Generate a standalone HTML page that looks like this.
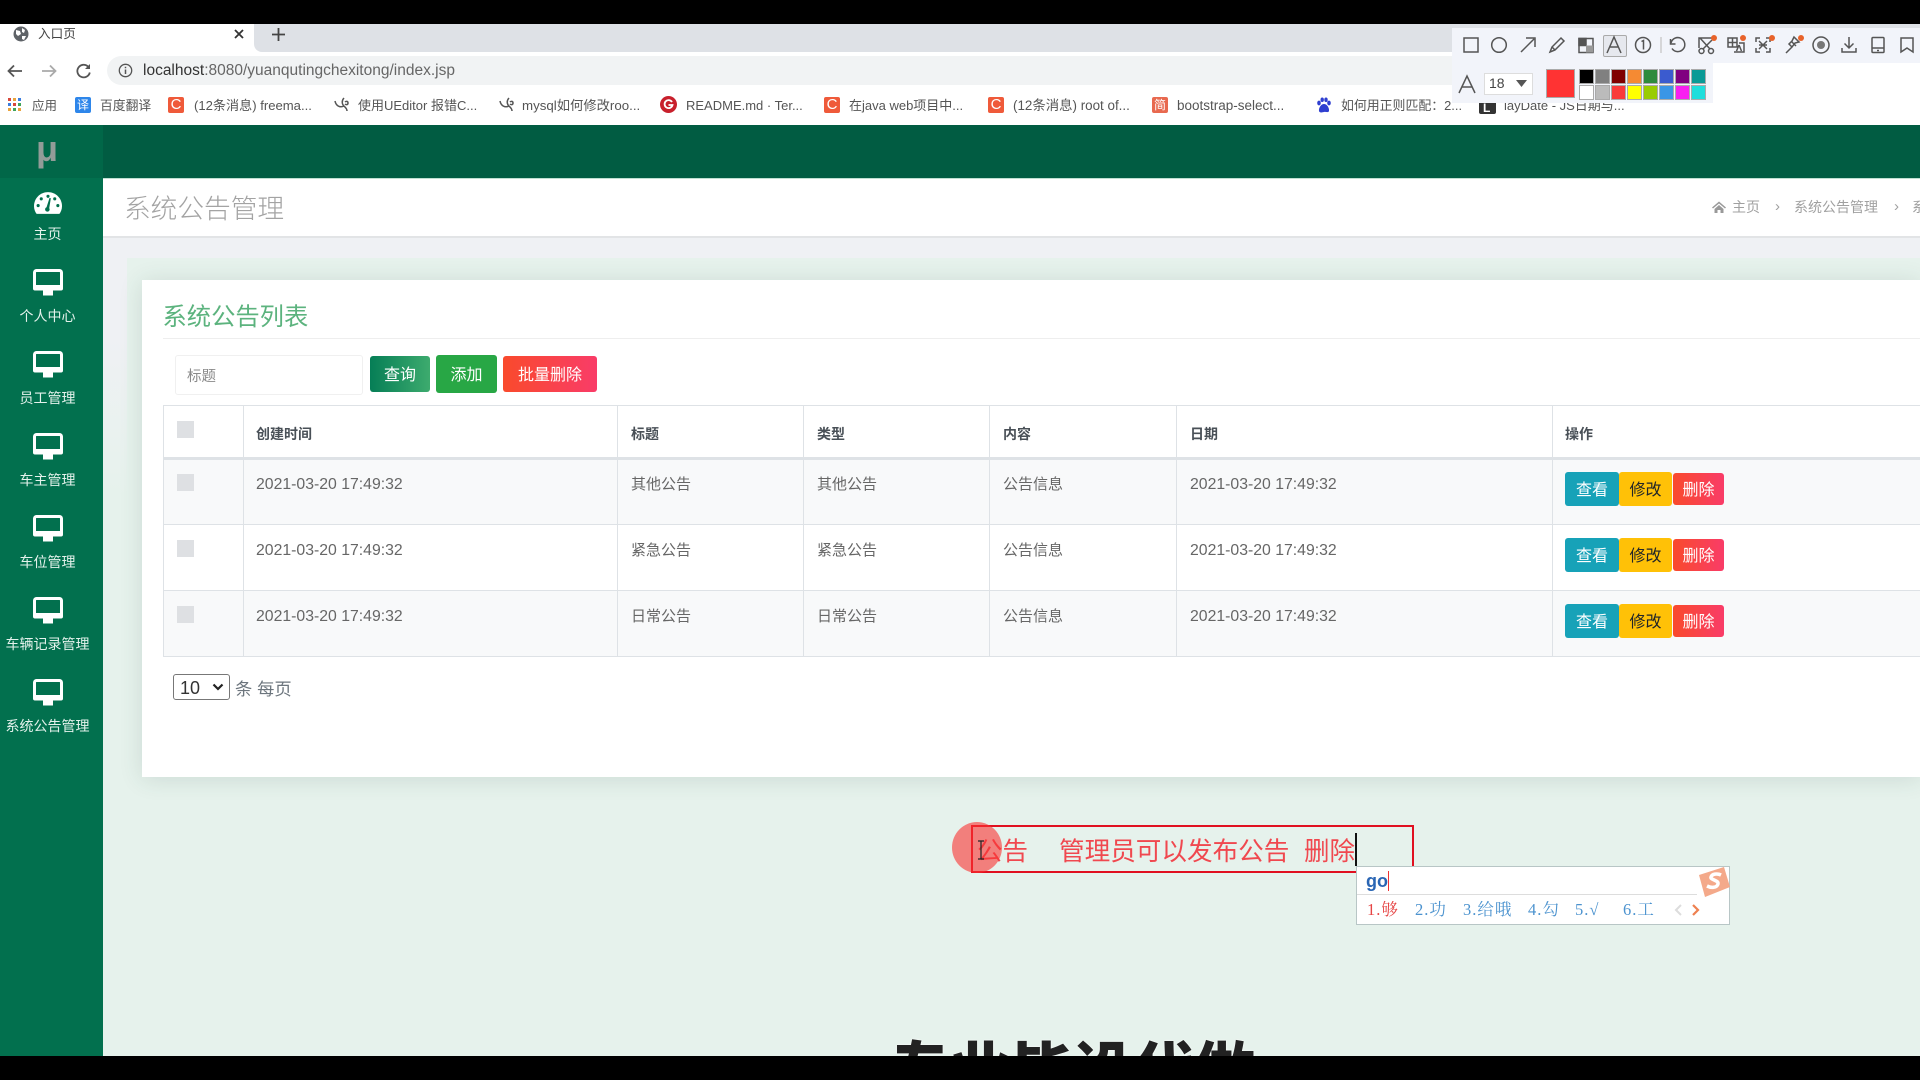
<!DOCTYPE html>
<html lang="zh-CN">
<head>
<meta charset="utf-8">
<title>入口页</title>
<style>
html{margin:0;padding:0;background:#000;width:1920px;height:1080px;overflow:hidden}
body{margin:0;padding:0;background:#000;width:1920px;height:1080px;overflow:hidden;position:relative;font-family:"Liberation Sans","Noto Sans CJK SC",sans-serif}
div,span,svg,select{position:absolute}
.t{white-space:nowrap;line-height:20px;height:20px}
.bm{font-size:13px;color:#555;top:96px}
.ic{width:16px;height:16px;top:97px;border-radius:2px;color:#fff;font-size:13px;line-height:16px;text-align:center}
.nl{left:0;width:95px;text-align:center;font-size:14px;color:#e4f2ec;top:auto}
.th{font-size:14px;font-weight:700;color:#495057;top:423.500px}
.td{font-size:15px;color:#666}
.dt{font-size:15.800px;color:#666}
.cb{left:177px;width:17px;height:17px;background:#dee0e3}
.vl{top:406px;height:250px;width:1px;background:#dee2e6}
.btn{color:#fff;text-align:center;border-radius:3px;font-size:16px}
.sw{width:13px;height:13px;border:1px solid #aaa}
.dot{width:6px;height:6px;border-radius:50%;background:#e8622a;top:35px}
.cand{font-family:"Liberation Serif","Noto Serif CJK SC",serif;font-size:16.500px;letter-spacing:1px;color:#4c93cf;top:900px}
</style>
</head>
<body>
<!-- browser chrome -->
<div style="left:0;top:24px;width:1920px;height:101px;background:#fff"></div>
<div style="left:254px;top:24px;width:1666px;height:28px;background:#dee1e6;border-bottom-left-radius:8px"></div>
<svg style="left:12px;top:25px" width="18" height="18" viewBox="0 0 18 18"><circle cx="9" cy="9" r="7.5" fill="#5f6368"/><path d="M4 5l4 1 1 3-3 2-2-2zM10 3l3 2-1 3-2-1zM10 11l4 0-2 4-2-1z" fill="#fff"/></svg>
<span class="t" style="left:38px;top:24px;font-size:12.600px;color:#444">入口页</span>
<svg style="left:233px;top:28px" width="12" height="12" viewBox="0 0 12 12"><path d="M2 2l8 8M10 2l-8 8" stroke="#333" stroke-width="1.800"/></svg>
<svg style="left:271px;top:27px" width="15" height="15" viewBox="0 0 15 15"><path d="M7.500 1v13M1 7.500h13" stroke="#444" stroke-width="1.800"/></svg>
<svg style="left:6px;top:62px" width="90" height="18" viewBox="0 0 90 18"><path d="M16 9H3M8 3.500L2.500 9 8 14.500" fill="none" stroke="#555" stroke-width="1.800"/><path d="M36 9h13M44 3.500L49.500 9 44 14.500" fill="none" stroke="#aaa" stroke-width="1.800"/><path d="M82 4.500a6.300 6.300 0 1 0 1.800 6" fill="none" stroke="#555" stroke-width="1.800"/><path d="M84 2v5h-5z" fill="#555"/></svg>
<div style="left:107px;top:56px;width:1400px;height:29px;background:#f1f3f4;border-radius:15px"></div>
<svg style="left:118px;top:63px" width="15" height="15" viewBox="0 0 15 15"><circle cx="7.500" cy="7.500" r="6.200" fill="none" stroke="#555" stroke-width="1.300"/><path d="M7.500 6.500v4.500M7.500 3.800v1.500" stroke="#555" stroke-width="1.500"/></svg>
<span class="t" style="left:143px;top:61px;font-size:15.500px;color:#666"><b style="font-weight:400;color:#333">localhost</b>:8080/yuanqutingchexitong/index.jsp</span>

<!-- bookmarks -->
<svg style="left:8px;top:98px" width="14" height="14" viewBox="0 0 14 14"><g><rect x="0" y="0" width="3" height="3" fill="#d8483b"/><rect x="5" y="0" width="3" height="3" fill="#e9a33c"/><rect x="10" y="0" width="3" height="3" fill="#3a7de0"/><rect x="0" y="5" width="3" height="3" fill="#3a7de0"/><rect x="5" y="5" width="3" height="3" fill="#d8483b"/><rect x="10" y="5" width="3" height="3" fill="#3fa45a"/><rect x="0" y="10" width="3" height="3" fill="#e9a33c"/><rect x="5" y="10" width="3" height="3" fill="#3fa45a"/><rect x="10" y="10" width="3" height="3" fill="#e9a33c"/></g></svg>
<span class="t bm" style="left:32px;font-size:12.500px">应用</span>
<span class="ic" style="left:75px;background:#2e86ea;font-size:12px">译</span>
<span class="t bm" style="left:100px;font-size:12.800px">百度翻译</span>
<span class="ic" style="left:168px;background:#ef5a3a;font-size:15px">C</span>
<span class="t bm" style="left:194px;font-size:13.100px">(12条消息) freema...</span>
<svg style="left:333px;top:96px" width="17" height="17" viewBox="0 0 17 17"><path d="M2 5c1 5 5 7 9 5M11 2c-2 2-3 6 1 9 1 1 2 3 2 4M12 6c1-1 3-1 3 1s-2 2-3 1" fill="none" stroke="#555" stroke-width="1.500"/></svg>
<span class="t bm" style="left:358px;font-size:13px">使用UEditor 报错C...</span>
<svg style="left:498px;top:96px" width="17" height="17" viewBox="0 0 17 17"><path d="M2 5c1 5 5 7 9 5M11 2c-2 2-3 6 1 9 1 1 2 3 2 4M12 6c1-1 3-1 3 1s-2 2-3 1" fill="none" stroke="#555" stroke-width="1.500"/></svg>
<span class="t bm" style="left:522px;font-size:13.300px">mysql如何修改roo...</span>
<svg style="left:660px;top:96px" width="17" height="17" viewBox="0 0 17 17"><circle cx="8.500" cy="8.500" r="8.500" fill="#c8202c"/><path d="M12 6a4 4 0 1 0 .5 3H8.500" fill="none" stroke="#fff" stroke-width="1.800"/></svg>
<span class="t bm" style="left:686px">README.md · Ter...</span>
<span class="ic" style="left:824px;background:#ef5a3a;font-size:15px">C</span>
<span class="t bm" style="left:849px;font-size:13px">在java web项目中...</span>
<span class="ic" style="left:988px;background:#ef5a3a;font-size:15px">C</span>
<span class="t bm" style="left:1013px;font-size:13.400px">(12条消息) root of...</span>
<span class="ic" style="left:1152px;background:#e8694f;font-size:12px">简</span>
<span class="t bm" style="left:1177px;font-size:13.500px">bootstrap-select...</span>
<svg style="left:1316px;top:97px" width="16" height="17" viewBox="0 0 16 17"><g fill="#2f3fd0"><ellipse cx="3" cy="6" rx="1.800" ry="2.400"/><ellipse cx="6.200" cy="2.800" rx="1.700" ry="2.300"/><ellipse cx="10" cy="2.800" rx="1.700" ry="2.300"/><ellipse cx="13" cy="6" rx="1.800" ry="2.400"/><path d="M8 7c-3 0-5.500 4-5 7 .5 2 3 1.500 5 1s4.500 1 5-1c.5-3-2-7-5-7z"/></g></svg>
<span class="t bm" style="left:1341px;font-size:12.900px">如何用正则匹配：2...</span>
<div style="left:1479px;top:97px;width:17px;height:17px;background:#333;border-radius:2px"></div>
<span class="t" style="left:1483px;top:98px;color:#fff;font-size:12px;font-weight:700">L</span>
<span class="t bm" style="left:1504px">layDate - JS日期与...</span>

<!-- screenshot toolbar -->
<div style="left:1452px;top:28px;width:468px;height:35px;background:#f2f4fa"></div>
<div style="left:1452px;top:63px;width:261px;height:40px;background:#f2f4fa"></div>
<div style="left:1603px;top:35px;width:22px;height:20px;background:#e6e8ee;border:1px solid #aaa;border-radius:2px"></div>
<svg style="left:1460px;top:34px" width="460" height="22" viewBox="0 0 460 22" fill="none" stroke="#555" stroke-width="1.500">
<rect x="4" y="4" width="14" height="14"/>
<circle cx="39" cy="11" r="7.300"/>
<path d="M61 18L74 5M66 4h9v9"/>
<path d="M90 18l2-5 9-9 3 3-9 9zM92 13l3 3"/>
<rect x="119" y="4.500" width="14" height="14"/><rect x="119" y="4.500" width="7" height="7" fill="#555"/><rect x="126" y="11.500" width="7" height="7" fill="#999" stroke="none"/>
<path d="M147 19l7-16 7 16M149.500 13h9"/>
<circle cx="183" cy="11" r="7.500"/><path d="M181.500 7.500l2-1v9"/>
<path d="M201 3v16" stroke="#ccc"/>
<path d="M210.500 5v5h5M211 9a7 7 0 1 1 1 5.500"/>
<path d="M239 14V4h16M240 4l10 11M252 6l-9 9"/><circle cx="241.500" cy="17" r="2.500"/><circle cx="251" cy="17" r="2.500"/>
<path d="M268 4h9v9h-9zM268 8.500h9M272.500 4v9M274 18h10V9h-5M279 11l-2.500 6M279 11l2.500 6"/>
<path d="M296 8V4h4M310 8V4h-4M296 14v4h4M310 14v4h-4M299 7l8 8M307 7l-8 8M299 11h8"/>
<path d="M326 19l6-6M331 7l5 5M334 3l5 5-4 1-3 4-3-3 3-3z"/>
<circle cx="361" cy="11" r="8"/><circle cx="361" cy="11" r="4" fill="#777" stroke="none"/>
<path d="M389 3v11M384.500 9.500l4.500 4.500 4.500-4.500M382 14v4h14v-4"/>
<rect x="412" y="3.500" width="12" height="15" rx="1"/><path d="M412 14h12M417 16.500h2"/>
<path d="M441 4h12v14l-6-4-6 4z"/>
</svg>
<span class="dot" style="left:1711px"></span><span class="dot" style="left:1740px"></span><span class="dot" style="left:1769px"></span><span class="dot" style="left:1798px"></span>
<svg style="left:1457px;top:73px" width="20" height="22" viewBox="0 0 20 22"><path d="M2 20L10 3l8 17M5 14h10" fill="none" stroke="#555" stroke-width="1.500"/></svg>
<div style="left:1484px;top:73px;width:47px;height:20px;background:#fff;border:1px solid #ddd"></div>
<span class="t" style="left:1489px;top:73px;font-size:14px;color:#444">18</span>
<svg style="left:1516px;top:80px" width="11" height="7" viewBox="0 0 11 7"><path d="M0 0h11L5.500 7z" fill="#555"/></svg>
<div style="left:1546px;top:69px;width:27px;height:27px;background:#ff3333;border:1px solid #aaa"></div>
<div class="sw" style="left:1579px;top:69px;background:#000"></div>
<div class="sw" style="left:1595px;top:69px;background:#808080"></div>
<div class="sw" style="left:1611px;top:69px;background:#800000"></div>
<div class="sw" style="left:1627px;top:69px;background:#f58a33"></div>
<div class="sw" style="left:1643px;top:69px;background:#2e8b3d"></div>
<div class="sw" style="left:1659px;top:69px;background:#3b5bcf"></div>
<div class="sw" style="left:1675px;top:69px;background:#800080"></div>
<div class="sw" style="left:1691px;top:69px;background:#0a9a96"></div>
<div class="sw" style="left:1579px;top:85px;background:#fff"></div>
<div class="sw" style="left:1595px;top:85px;background:#bbb"></div>
<div class="sw" style="left:1611px;top:85px;background:#f93a3a"></div>
<div class="sw" style="left:1627px;top:85px;background:#ffff00"></div>
<div class="sw" style="left:1643px;top:85px;background:#99cc00"></div>
<div class="sw" style="left:1659px;top:85px;background:#3a96e6"></div>
<div class="sw" style="left:1675px;top:85px;background:#f81ef0"></div>
<div class="sw" style="left:1691px;top:85px;background:#1fdedc"></div>

<!-- app -->
<div style="left:0;top:125px;width:1920px;height:931px;background:#e6f2ec;overflow:hidden">
  <div style="left:103px;top:113px;width:1817px;height:20px;background:#eff1f4"></div>
  <div style="left:103px;top:113px;width:24px;height:818px;background:linear-gradient(180deg,#eff1f4 0,#eff1f4 100px,#e6f2ec 260px)"></div>
  <div style="left:103px;top:0;width:1817px;height:53px;background:#015c42"></div>
  <div style="left:103px;top:53px;width:1817px;height:60px;background:#fff;border-bottom:2px solid #e2e4e6;border-top:1px solid #bfe0d2;box-sizing:border-box"></div>
  <div style="left:0;top:0;width:103px;height:931px;background:#02704e"></div>
  <div style="left:0;top:0;width:103px;height:53px;background:#016748"></div>
</div>
<span class="t" style="left:36px;top:130px;height:38px;line-height:38px;font-size:36px;font-weight:700;color:#929c98">μ</span>

<!-- sidebar -->
<svg style="left:34px;top:192px" width="28" height="22" viewBox="0 0 27 21"><path d="M13.500 0C6 0 0 6 0 13.500c0 3 1 5.500 2.500 7.500h22c1.500-2 2.500-4.500 2.500-7.500C27 6 21 0 13.500 0z" fill="#fff"/><g fill="#02704e"><circle cx="13.500" cy="4" r="1.500"/><circle cx="7" cy="6.500" r="1.500"/><circle cx="20" cy="6.500" r="1.500"/><circle cx="4" cy="13" r="1.500"/><circle cx="23" cy="13" r="1.500"/><path d="M15 5.500l1.200.4-1.500 9.500a2.200 2.200 0 1 1-2.600-.8z"/></g></svg>
<span class="t nl" style="top:223.500px">主页</span>
<svg style="left:0;top:0;width:0;height:0"><defs><g id="mon"><rect x="1.500" y="1.500" width="27" height="18" rx="2" fill="none" stroke="#fff" stroke-width="3"/><rect x="0" y="16" width="30" height="5.500" rx="2" fill="#fff"/><rect x="10" y="21.500" width="10" height="5" fill="#fff"/></g></defs></svg>
<svg style="left:33px;top:269px" width="30" height="27"><use href="#mon"/></svg>
<span class="t nl" style="top:306px">个人中心</span>
<svg style="left:33px;top:351px" width="30" height="27"><use href="#mon"/></svg>
<span class="t nl" style="top:388px">员工管理</span>
<svg style="left:33px;top:433px" width="30" height="27"><use href="#mon"/></svg>
<span class="t nl" style="top:470px">车主管理</span>
<svg style="left:33px;top:515px" width="30" height="27"><use href="#mon"/></svg>
<span class="t nl" style="top:552px">车位管理</span>
<svg style="left:33px;top:597px" width="30" height="27"><use href="#mon"/></svg>
<span class="t nl" style="top:634px">车辆记录管理</span>
<svg style="left:33px;top:679px" width="30" height="27"><use href="#mon"/></svg>
<span class="t nl" style="top:716px">系统公告管理</span>

<!-- heading bar -->
<span class="t" style="left:124px;top:193px;height:32px;line-height:32px;font-size:26.700px;color:#a3a3a3;font-weight:300">系统公告管理</span>
<svg style="left:1712px;top:200px" width="14" height="14" viewBox="0 0 14 14"><path d="M7 1.500L0 7.500l1 1 6-5 6 5 1-1zM2.500 9v4h3V10h3v3h3V9L7 5z" fill="#999"/></svg>
<span class="t" style="left:1732px;top:197px;font-size:14px;color:#a0a0a0">主页</span>
<span class="t" style="left:1775px;top:197px;font-size:15px;color:#a0a0a0">›</span>
<span class="t" style="left:1794px;top:197px;font-size:14px;color:#a0a0a0">系统公告管理</span>
<span class="t" style="left:1894px;top:197px;font-size:15px;color:#a0a0a0">›</span>
<span class="t" style="left:1912px;top:197px;font-size:14px;color:#a0a0a0">系</span>

<!-- card -->
<div style="left:142px;top:280px;width:1778px;height:497px;background:#fff;box-shadow:0 2px 22px rgba(40,80,70,.14)"></div>
<span class="t" style="left:162.500px;top:302px;height:32px;line-height:32px;font-size:24.300px;color:#5cb37e">系统公告列表</span>
<div style="left:163px;top:338px;width:1757px;height:1px;background:#eee"></div>
<div style="left:175px;top:355px;width:186px;height:38px;border:1px solid #f0f0f0;border-radius:3px;background:#fff"></div>
<span class="t" style="left:187px;top:367px;font-size:14.500px;color:#8a8a8a">标题</span>
<div class="btn" style="left:370px;top:356px;width:60px;height:36px;line-height:40px;background:linear-gradient(90deg,#067e56,#3dab6e)">查询</div>
<div class="btn" style="left:436px;top:355px;width:61px;height:38px;line-height:42px;background:#28a745">添加</div>
<div class="btn" style="left:503px;top:356px;width:94px;height:36px;line-height:40px;background:linear-gradient(90deg,#f94a2c,#f93c68)">批量删除</div>

<!-- table -->
<div style="left:163px;top:405px;width:1757px;height:1px;background:#dee2e6"></div>
<div style="left:163px;top:460px;width:1757px;height:64px;background:#f8f9fa"></div>
<div style="left:163px;top:591px;width:1757px;height:65px;background:#f8f9fa"></div>
<div style="left:163px;top:457px;width:1757px;height:3px;background:#dee2e6"></div>
<div style="left:163px;top:524px;width:1757px;height:1px;background:#dee2e6"></div>
<div style="left:163px;top:590px;width:1757px;height:1px;background:#dee2e6"></div>
<div style="left:163px;top:656px;width:1757px;height:1px;background:#dee2e6"></div>
<div class="vl" style="left:163px"></div><div class="vl" style="left:243px"></div><div class="vl" style="left:617px"></div><div class="vl" style="left:803px"></div><div class="vl" style="left:989px"></div><div class="vl" style="left:1176px"></div><div class="vl" style="left:1552px"></div>
<div class="cb" style="top:421px"></div><div class="cb" style="top:474px"></div><div class="cb" style="top:540px"></div><div class="cb" style="top:606px"></div>
<span class="t th" style="left:256px">创建时间</span>
<span class="t th" style="left:631px">标题</span>
<span class="t th" style="left:817px">类型</span>
<span class="t th" style="left:1003px">内容</span>
<span class="t th" style="left:1190px">日期</span>
<span class="t th" style="left:1565px">操作</span>

<span class="t dt" style="left:256px;top:474.500px">2021-03-20 17:49:32</span>
<span class="t td" style="left:631px;top:474.500px">其他公告</span>
<span class="t td" style="left:817px;top:474.500px">其他公告</span>
<span class="t td" style="left:1003px;top:474.500px">公告信息</span>
<span class="t dt" style="left:1190px;top:474.500px">2021-03-20 17:49:32</span>

<span class="t dt" style="left:256px;top:540.500px">2021-03-20 17:49:32</span>
<span class="t td" style="left:631px;top:540.500px">紧急公告</span>
<span class="t td" style="left:817px;top:540.500px">紧急公告</span>
<span class="t td" style="left:1003px;top:540.500px">公告信息</span>
<span class="t dt" style="left:1190px;top:540.500px">2021-03-20 17:49:32</span>

<span class="t dt" style="left:256px;top:606.500px">2021-03-20 17:49:32</span>
<span class="t td" style="left:631px;top:606.500px">日常公告</span>
<span class="t td" style="left:817px;top:606.500px">日常公告</span>
<span class="t td" style="left:1003px;top:606.500px">公告信息</span>
<span class="t dt" style="left:1190px;top:606.500px">2021-03-20 17:49:32</span>

<div class="btn" style="left:1565px;top:472px;width:54px;height:34px;line-height:38px;background:#17a2b8">查看</div>
<div class="btn" style="left:1619px;top:472px;width:53px;height:34px;line-height:38px;background:#ffc107;color:#212529">修改</div>
<div class="btn" style="left:1673px;top:473px;width:51px;height:32px;line-height:36px;background:linear-gradient(90deg,#f94a2c,#f93c68)">删除</div>
<div class="btn" style="left:1565px;top:538px;width:54px;height:34px;line-height:38px;background:#17a2b8">查看</div>
<div class="btn" style="left:1619px;top:538px;width:53px;height:34px;line-height:38px;background:#ffc107;color:#212529">修改</div>
<div class="btn" style="left:1673px;top:539px;width:51px;height:32px;line-height:36px;background:linear-gradient(90deg,#f94a2c,#f93c68)">删除</div>
<div class="btn" style="left:1565px;top:604px;width:54px;height:34px;line-height:38px;background:#17a2b8">查看</div>
<div class="btn" style="left:1619px;top:604px;width:53px;height:34px;line-height:38px;background:#ffc107;color:#212529">修改</div>
<div class="btn" style="left:1673px;top:605px;width:51px;height:32px;line-height:36px;background:linear-gradient(90deg,#f94a2c,#f93c68)">删除</div>

<div style="left:173px;top:674px;width:55px;height:24px;border:1px solid #777;border-radius:3px;background:#fff"></div>
<span class="t" style="left:180px;top:678px;font-size:18px;color:#333">10</span>
<svg style="left:212px;top:683px" width="12" height="8" viewBox="0 0 12 8"><path d="M1.500 1.500L6 6l4.500-4.500" fill="none" stroke="#222" stroke-width="2.200"/></svg>
<span class="t" style="left:235px;top:678.500px;font-size:17.300px;color:#6c757d">条 每页</span>

<!-- annotation -->
<div style="left:880px;top:1030px;width:400px;height:26px;overflow:hidden">
<span class="t" style="left:9px;top:6px;height:70px;line-height:70px;font-size:61px;font-weight:900;color:#222;text-shadow:0 0 2px #fff">专业毕设代做</span>
</div>
<div style="left:971px;top:825px;width:439px;height:44px;border:2.500px solid #e01020"></div>
<span class="t" style="left:977px;top:836px;height:32px;line-height:32px;font-size:25.500px;color:#f0484f;white-space:pre">公告</span>
<span class="t" style="left:1059px;top:836px;height:32px;line-height:32px;font-size:25.600px;color:#f0484f">管理员可以发布公告</span>
<span class="t" style="left:1304px;top:836px;height:32px;line-height:32px;font-size:25.500px;color:#f0484f">删除</span>
<div style="left:952px;top:822px;width:50px;height:51px;border-radius:50%;background:rgba(250,50,50,.6)"></div>
<svg style="left:976px;top:840px" width="10" height="20" viewBox="0 0 10 20"><path d="M2 1h6M5 1v18M2 19h6" stroke="#222" stroke-width="1.200" fill="none"/></svg>
<div style="left:1355px;top:833px;width:2px;height:33px;background:#111"></div>

<!-- IME -->
<div style="left:1356px;top:866px;width:372px;height:57px;background:#fff;border:1px solid #b8c6c6"></div>
<div style="left:1357px;top:894px;width:340px;height:1px;background:#ddd"></div>
<span class="t" style="left:1366px;top:871px;font-size:18px;font-weight:700;color:#2a66b4">go</span>
<div style="left:1388px;top:871px;width:1px;height:20px;background:#e33"></div>
<span class="t cand" style="left:1367px;color:#e64545">1.够</span>
<span class="t cand" style="left:1415px">2.功</span>
<span class="t cand" style="left:1463px">3.给哦</span>
<span class="t cand" style="left:1528px">4.勾</span>
<span class="t cand" style="left:1575px">5.√</span>
<span class="t cand" style="left:1623px">6.工</span>
<svg style="left:1674px;top:904px" width="32" height="12" viewBox="0 0 32 12"><path d="M7 1L2 6l5 5" fill="none" stroke="#ddd" stroke-width="2"/><path d="M19 1l5 5-5 5" fill="none" stroke="#ee8050" stroke-width="2.200"/></svg>
<svg style="left:1696px;top:866px" width="35" height="34" viewBox="0 0 35 34"><path d="M3 9L28 1l6 20-25 10z" fill="#f4a98a"/><path d="M25 9c-4-2-9-1-10 2s8 3 7 7-7 4-11 2" fill="none" stroke="#fff" stroke-width="3.500"/></svg>

<!-- letterbox -->
<div style="left:0;top:0;width:1920px;height:24px;background:#000"></div>
<div style="left:0;top:1056px;width:1920px;height:24px;background:#000"></div>
</body>
</html>
